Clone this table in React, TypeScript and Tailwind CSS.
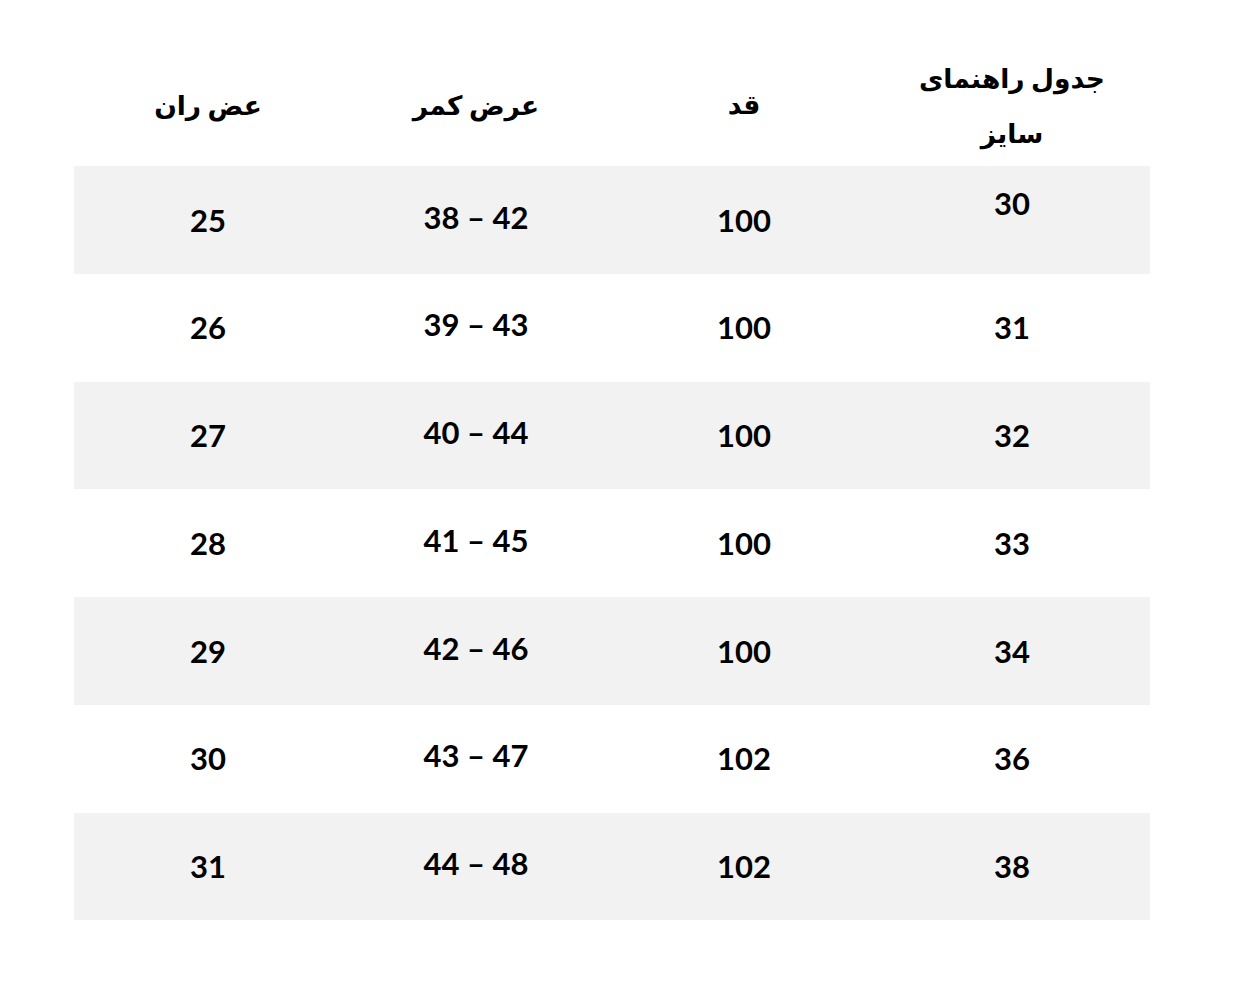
const rows = [
  { size: '30', height: '100', waist: '38 – 42', thigh: '25' },
  { size: '31', height: '100', waist: '39 – 43', thigh: '26' },
  { size: '32', height: '100', waist: '40 – 44', thigh: '27' },
  { size: '33', height: '100', waist: '41 – 45', thigh: '28' },
  { size: '34', height: '100', waist: '42 – 46', thigh: '29' },
  { size: '36', height: '102', waist: '43 – 47', thigh: '30' },
  { size: '38', height: '102', waist: '44 – 48', thigh: '31' },
];

export default function App() {
  return (
    <div className="w-[1238px] h-[1005px] bg-white pt-[50px] pl-[74px] font-['Lato','DejaVu_Sans',sans-serif] text-black">
      <div dir="rtl" className="w-[1076px]">
        {/* header */}
        <div className="grid grid-cols-4 h-[116px] pr-[4px] items-center text-center text-[26.5px] font-bold">
          <div className="leading-[55px] pb-[4px]">
            جدول راهنمای
            <br />
            سایز
          </div>
          <div className="pb-[6px]">قد</div>
          <div className="pb-[4px]">عرض کمر</div>
          <div className="pb-[4px]">عض ران</div>
        </div>

        {rows.map((r, i) => (
          <div
            key={i}
            className={`grid grid-cols-4 h-[107.75px] pr-[4px] items-center text-center text-[31px] font-bold ${i % 2 === 0 ? 'bg-[#f2f2f2]' : 'bg-white'}`}
          >
            <div className={i === 0 ? 'pb-[34px]' : ''}>{r.size}</div>
            <div>{r.height}</div>
            <div className="pb-[6px]">
              <span dir="ltr">{r.waist}</span>
            </div>
            <div>{r.thigh}</div>
          </div>
        ))}
      </div>
    </div>
  );
}
